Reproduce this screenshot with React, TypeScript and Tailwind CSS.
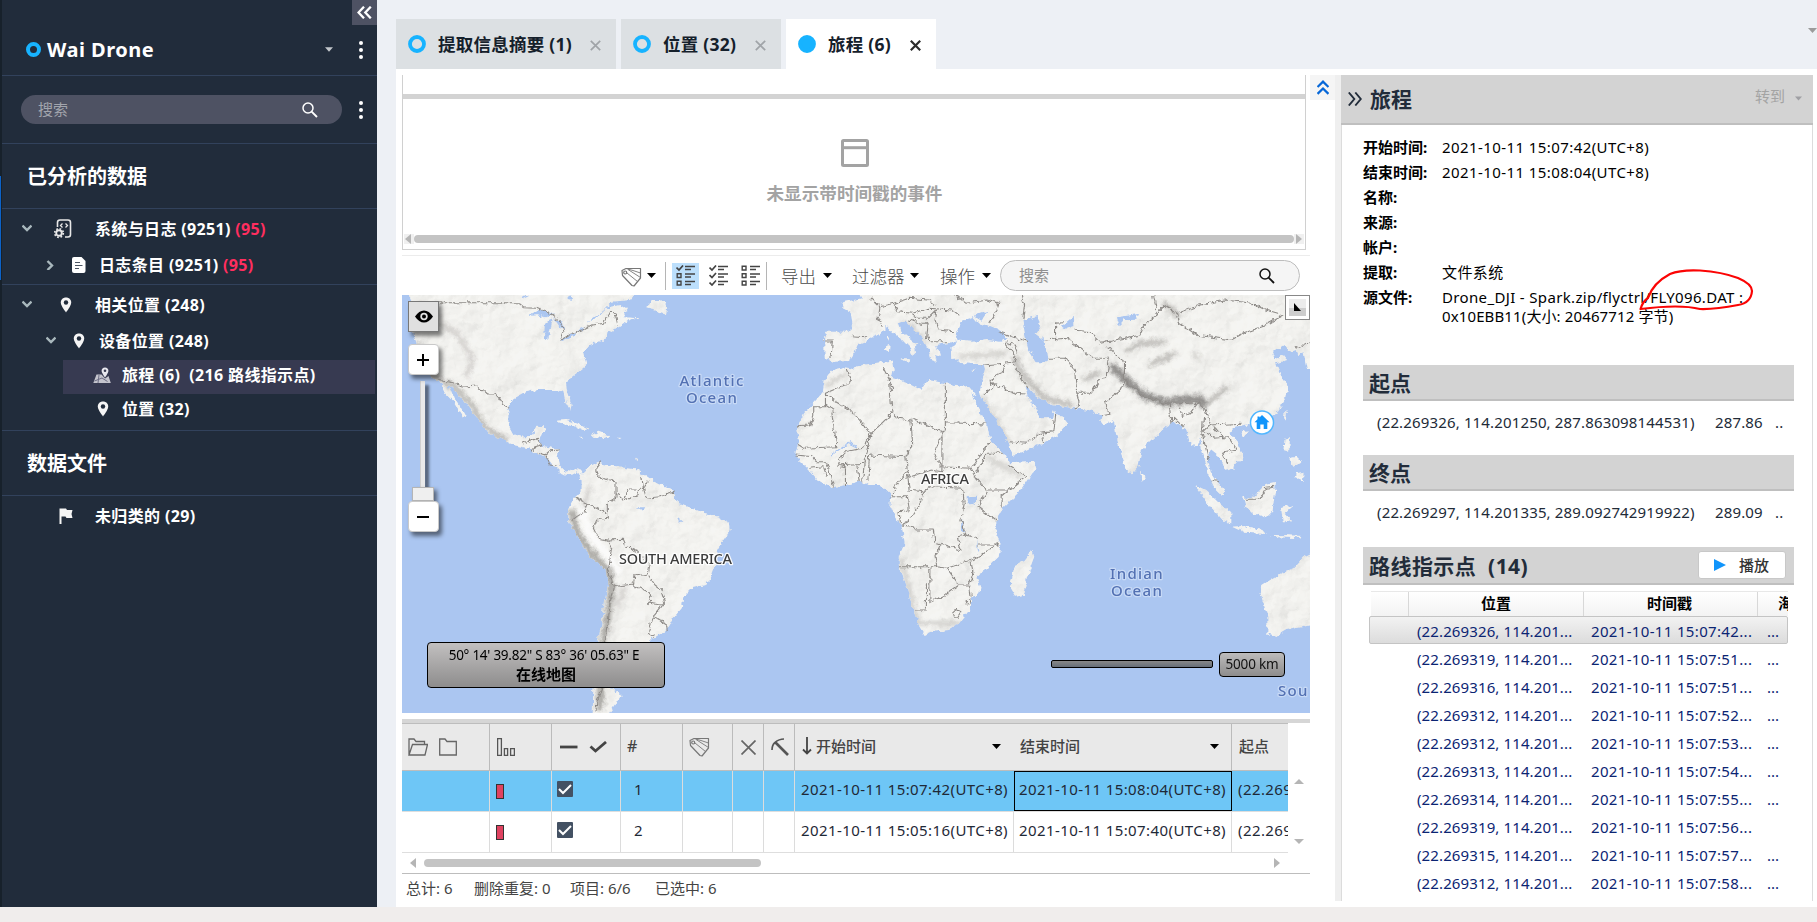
import React from "react";

const FONT = "font-['Noto_Sans','Noto_Sans_CJK_SC',sans-serif]";

/* ---------- small icons ---------- */

function Caret({ className = "" }: { className?: string }) {
  return (
    <svg className={className} width="9" height="5" viewBox="0 0 9 5">
      <path d="M0 0H9L4.5 5Z" fill="currentColor" />
    </svg>
  );
}

function Dots() {
  return (
    <svg width="4" height="18" viewBox="0 0 4 18" fill="#fff">
      <circle cx="2" cy="2" r="2" />
      <circle cx="2" cy="9" r="2" />
      <circle cx="2" cy="16" r="2" />
    </svg>
  );
}

function Magnifier({ color }: { color: string }) {
  return (
    <svg width="16" height="16" viewBox="0 0 16 16" fill="none" stroke={color} strokeWidth="1.5">
      <circle cx="6" cy="6" r="5" />
      <path d="M9.6 9.6L15 15" strokeWidth="1.9" />
    </svg>
  );
}

function Pin() {
  return (
    <svg width="12" height="16" viewBox="0 0 12 16">
      <path d="M6 0.5C2.8 0.5 0.8 2.8 0.8 5.6C0.8 9 6 15.5 6 15.5S11.2 9 11.2 5.6C11.2 2.8 9.2 0.5 6 0.5Z" fill="#f5f5f5" />
      <circle cx="6" cy="5.5" r="2.2" fill="#212c3b" />
    </svg>
  );
}

function Chevron({ open }: { open: boolean }) {
  return (
    <svg width="10" height="10" viewBox="0 0 10 10" fill="none" stroke="#a9b8bd" strokeWidth="2.4">
      <path d={open ? "M0.5 1.5L5 6L9.5 1.5" : "M2.500 1L7 5.5L2.500 10"} />
    </svg>
  );
}

function SystemLog() {
  return (
    <svg width="18" height="20" viewBox="0 0 18 20" fill="none" stroke="#e8e8e8" strokeWidth="1.6">
      <path d="M3.500 8V3.500Q3.500 1 6 1H14Q16.500 1 16.500 3.500V15.500Q16.500 18 14 18H11" />
      <path d="M8.500 4.500L6.500 6.500L8.500 8.500M11.500 4.500L13.500 6.500L11.500 8.500" strokeWidth="1.300" />
      <circle cx="5" cy="14" r="2.800" strokeWidth="1.900" />
      <circle cx="5" cy="14" r="4.300" strokeWidth="1.700" strokeDasharray="1.700 1.680" />
    </svg>
  );
}

function DocIcon() {
  return (
    <svg width="14" height="16" viewBox="0 0 14 16">
      <path d="M2 0H9.500L13.500 4V14Q13.500 16 11.500 16H2Q0 16 0 14V2Q0 0 2 0Z" fill="#fff" />
      <path d="M3 5.500H8M3 8.500H10.500M3 11.500H7" stroke="#4b5563" strokeWidth="1.200" />
    </svg>
  );
}

function JourneyIcon() {
  return (
    <svg width="18" height="17" viewBox="0 0 18 17">
      <path d="M3.500 7.500H8.500L12 11.500L15.500 9L17.800 16H0.300Z" fill="#c4c4cd" />
      <path d="M1.500 14L9 11L14.500 14.500M6 8L5 16" stroke="#6d6d84" fill="none" />
      <path d="M12 0.500C9.900 0.500 8.600 2 8.600 3.800C8.600 6 12 10.500 12 10.500S15.400 6 15.400 3.800C15.400 2 14.100 0.500 12 0.500Z" fill="#e8e8ee" />
      <circle cx="12" cy="3.800" r="1.300" fill="#373a51" />
    </svg>
  );
}

function FlagIcon() {
  return (
    <svg width="14" height="16" viewBox="0 0 14 16">
      <path d="M0.500 0.500H7L8 2H13.500L12.500 6L13.500 10H7.500L6.500 8.500H2.500V16H0.500Z" fill="#f5f5f5" />
    </svg>
  );
}

function TagsIcon() {
  return (
    <svg width="21" height="20" viewBox="0 0 21 20" fill="none" stroke="#777" strokeWidth="1.200" strokeLinejoin="round">
      <path d="M1 3.500L5 1.500H19.500V11L13 19L11 18.500L1.500 8.500Z" />
      <path d="M6 6L16.500 14.500M7 2.500L19.500 10.500M5 1.500L12 3.500L19.500 6" strokeWidth="0.900" />
      <circle cx="4.200" cy="5.500" r="1.500" />
    </svg>
  );
}

function ListIcon({ checks }: { checks: number }) {
  return (
    <svg width="20" height="21" viewBox="0 0 20 21" fill="none" stroke="#444" strokeWidth="1.400">
      {[0, 1, 2].map((i) => (
        <g key={i} transform={`translate(0 ${i * 7.5})`}>
          {i < checks ? <path d="M0.500 2.500L3 5L7 0.500" strokeWidth="1.700" /> : <path d="M1.200 1.200H5V5H1.200Z" />}
          <path d="M9 1.500H19M9 4.500H15" />
        </g>
      ))}
    </svg>
  );
}

function ScrollArrow({ dir }: { dir: "left" | "right" | "up" | "down" }) {
  const d = {
    left: "M7 0V10L1 5Z",
    right: "M2 0V10L8 5Z",
    up: "M0 7H10L5 2Z",
    down: "M0 2H10L5 7Z",
  }[dir];
  return (
    <svg width="10" height="10" viewBox="0 0 10 10">
      <path d={d} fill="#b5b5b5" />
    </svg>
  );
}

/* ---------- sidebar ---------- */

function TreeRow({
  h,
  pad,
  open,
  icon,
  iconW,
  text,
  extra,
}: {
  h: string;
  pad: string;
  open?: boolean;
  icon: React.ReactNode;
  iconW: string;
  text: string;
  extra?: string;
}) {
  return (
    <div className={`flex items-center ${h} ${pad}`}>
      <span className="w-[10px] shrink-0">{open === undefined ? null : <Chevron open={open} />}</span>
      <span className={`flex justify-center shrink-0 ${iconW}`}>{icon}</span>
      <span className="text-[16px] font-bold text-white tracking-[0.350px] whitespace-pre leading-6">
        {text}
        {extra && <span className="text-[#ff2e5f]"> {extra}</span>}
      </span>
    </div>
  );
}

function Sidebar() {
  return (
    <aside className="w-[377px] h-[907px] shrink-0 flex bg-[#212c3b]">
      <div className="w-[2px] flex flex-col bg-[#17212b]">
        <div className="h-[104px] w-px mt-[176px] bg-[#0c62c8]" />
      </div>
      <div className="flex-1 flex flex-col">
        <div className="relative h-[76px] border-b border-[#32425c] flex items-center pl-[24px] pr-[14px] pt-[24px]">
          <svg width="15" height="15" viewBox="0 0 15 15">
            <circle cx="7.500" cy="7.500" r="5.500" fill="none" stroke="#17b3ff" strokeWidth="4" />
          </svg>
          <span className="ml-[6px] text-[20px] font-bold text-white tracking-[0.500px] leading-6">Wai Drone</span>
          <Caret className="ml-auto mr-[26px] text-[#c3c7cc] w-[8px]" />
          <Dots />
          <div className="absolute right-0 top-0 w-[25px] h-[25px] bg-[#4e5263] flex items-center justify-center">
            <svg width="15" height="13" viewBox="0 0 15 13" fill="none" stroke="#fff" strokeWidth="2.300">
              <path d="M7 0.700L1.500 6.500L7 12.300M13.800 0.700L8.300 6.500L13.800 12.300" />
            </svg>
          </div>
        </div>
        <div className="h-[68px] border-b border-[#32425c] flex items-center pl-[19px] pr-[14px]">
          <div className="w-[321px] h-[29px] rounded-full bg-[#4e5263] flex items-center pl-[17px] pr-[24px]">
            <span className="text-[15px] text-[#a2a5ad]">搜索</span>
            <span className="ml-auto"><Magnifier color="#fff" /></span>
          </div>
          <span className="ml-auto"><Dots /></span>
        </div>
        <h2 className="h-[65px] border-b border-[#32425c] flex items-center pl-[25px] pt-[2px] text-[20px] font-bold text-white">已分析的数据</h2>
        <div className="h-[76px] border-b border-[#32425c] pt-[2px]">
          <TreeRow h="h-[36px]" pad="pl-[20px]" open iconW="w-[63px] pr-[1px]" icon={<SystemLog />} text="系统与日志 (9251)" extra="(95)" />
          <TreeRow h="h-[36px]" pad="pl-[43px]" open={false} iconW="w-[44px] pl-[3px]" icon={<DocIcon />} text="日志条目 (9251)" extra="(95)" />
        </div>
        <div className="h-[146px] border-b border-[#32425c] pt-[2px]">
          <TreeRow h="h-[36px]" pad="pl-[20px]" open iconW="w-[63px] pl-[5px]" icon={<Pin />} text="相关位置 (248)" />
          <TreeRow h="h-[37px]" pad="pl-[44px] pb-[2px]" open iconW="w-[43px] pl-[3px]" icon={<Pin />} text="设备位置 (248)" />
          <div className="ml-[61px] mr-[2px] h-[34px] bg-[#373a51] flex items-center pb-[4px]">
            <TreeRow h="h-[30px]" pad="pl-[18px]" iconW="w-[31px] pr-[9px]" icon={<JourneyIcon />} text="旅程 (6)  (216 路线指示点)" />
          </div>
          <TreeRow h="h-[31px]" pad="pl-[79px] pb-[2px]" iconW="w-[31px] pr-[8px]" icon={<Pin />} text="位置 (32)" />
        </div>
        <h2 className="h-[65px] border-b border-[#32425c] flex items-center pl-[25px] pt-[2px] text-[20px] font-bold text-white">数据文件</h2>
        <TreeRow h="h-[41px]" pad="pl-[20px] pb-[2px]" iconW="w-[63px] pl-[5px]" icon={<FlagIcon />} text="未归类的 (29)" />
      </div>
    </aside>
  );
}

/* ---------- tabs ---------- */

function Tab({ label, active, w }: { label: string; active?: boolean; w: string }) {
  return (
    <div className={`${w} h-[50px] flex items-center pl-[12px] pr-[15px] ${active ? "bg-white" : "bg-[#dce0e3]"}`}>
      <svg width="18" height="18" viewBox="0 0 18 18" className="-mt-[11px] translate-y-[5px]">
        <circle cx="9" cy="9" r="7" fill={active ? "#17b3ff" : "none"} stroke="#17b3ff" strokeWidth="3.800" />
      </svg>
      <span className="ml-[12px] text-[17.500px] font-bold text-[#15202b] whitespace-pre tracking-[0.250px]">{label}</span>
      <svg width="11" height="11" viewBox="0 0 11 11" className="ml-auto mt-[2px]" stroke={active ? "#2b2b2b" : "#a0a4a8"} strokeWidth={active ? 2.2 : 1.7}>
        <path d="M0.800 0.800L10.200 10.200M10.200 0.800L0.800 10.200" />
      </svg>
    </div>
  );
}

/* ---------- timeline ---------- */

function Timeline() {
  return (
    <div className="flex h-[180px]">
      <div className="w-[904px] h-[175px] border-x border-b border-[#d0d0d0] flex flex-col">
        <div className="h-[19px]" />
        <div className="h-[5px] bg-[#d3d3d3]" />
        <div className="flex-1 flex flex-col items-center pt-[40px] pl-px">
          <svg width="28" height="28" viewBox="0 0 28 28" fill="none" stroke="#a3a3a3" strokeWidth="3">
            <rect x="1.500" y="1.500" width="25" height="25" rx="1" />
            <path d="M1.500 8.700H26.500" />
          </svg>
          <div className="mt-[13px] text-[17.600px] leading-[26px] font-bold text-[#a3a3a3]">未显示带时间戳的事件</div>
        </div>
        <div className="h-[15px] flex items-start px-px">
          <span className="bg-[#f0f0f0]"><ScrollArrow dir="left" /></span>
          <div className="flex-1 h-[8px] mt-px rounded-full bg-[#c4c4c4]" />
          <span className="bg-[#f0f0f0]"><ScrollArrow dir="right" /></span>
        </div>
      </div>
      <div className="ml-[4px] w-[25px] h-[25px] bg-[#f5f5f5] flex items-center justify-center">
        <svg width="12" height="15" viewBox="0 0 12 15" fill="none" stroke="#0667d8" strokeWidth="2.300">
          <path d="M0.500 7L6 1.700L11.500 7M0.500 13.800L6 8.500L11.500 13.800" />
        </svg>
      </div>
    </div>
  );
}

function Toolbar() {
  const label = "text-[17.500px] text-[#4a4a4a] font-light leading-6";
  return (
    <div className="w-[908px] h-[40px] border-t border-[#ececec] flex items-center pl-[219px] pr-[10px]">
      <span className="mt-[2px]"><TagsIcon /></span>
      <Caret className="ml-[5px]" />
      <div className="ml-[9px] w-px h-[28px] bg-[#b5b5b5]" />
      <div className="ml-[6px] w-[27px] h-[26px] bg-[#bcdffc] flex items-center justify-center"><ListIcon checks={1} /></div>
      <span className="ml-[10px]"><ListIcon checks={3} /></span>
      <span className="ml-[12px]"><ListIcon checks={0} /></span>
      <div className="ml-[5px] w-px h-[28px] bg-[#b5b5b5]" />
      <span className={`ml-[14px] w-[42px] ${label}`}>导出</span>
      <Caret />
      <span className={`ml-[20px] w-[58px] ${label}`}>过滤器</span>
      <Caret />
      <span className={`ml-[21px] w-[42px] ${label}`}>操作</span>
      <Caret />
      <div className="ml-auto w-[300px] h-[31px] rounded-full border border-[#bdbdbd] bg-[#f5f5f5] flex items-center pl-[18px] pr-[24px]">
        <span className="text-[15px] text-[#8f8f8f]">搜索</span>
        <span className="ml-auto"><Magnifier color="#111" /></span>
      </div>
    </div>
  );
}

/* ---------- map ---------- */

const WEST = "translate(390 290) scale(0.33333)";
const EAST = "translate(780 290) scale(0.34447 0.33333)";

const LAND_WEST = [
  "M50 0L75 60L70 130L80 165L95 215L120 262L148 275L165 310L190 335L205 360L222 386L228 380L205 340L185 310L175 285L195 300L220 330L250 370L272 395L285 425L330 445L370 465L415 475L440 490L470 502L490 527L515 550L540 557L560 547L572 562L577 545L550 538L528 545L508 525L503 505L508 480L480 472L455 468L450 450L465 412L440 410L425 437L395 440L370 432L355 405L355 350L370 325L400 308L440 300L500 300L520 305L528 340L540 362L545 345L530 300L528 275L560 250L590 225L580 190L600 165L620 155L650 145L652 130L690 108L715 92L750 85L700 82L712 60L690 45L655 52L615 88L590 98L640 62L665 35L720 30L745 0Z",
  "M772 55L785 30L810 30L832 52L828 72L800 62Z",
  "M500 392L530 390L570 405L600 420L580 422L545 405L510 398Z",
  "M605 435L625 425L660 437L640 445L610 440Z",
  "M565 440L580 441L578 446ZM680 440L700 441L690 446ZM735 500L742 505L738 512Z",
  "M572 560L590 535L625 515L640 522L665 528L700 530L735 535L765 555L800 580L845 600L862 640L895 652L930 665L985 680L1020 700L1022 720L1000 750L980 785L975 830L960 870L945 885L905 895L880 920L875 955L850 985L825 1025L795 1045L780 1040L785 1080L740 1110L700 1130L690 1170L660 1195L695 1215L680 1240L655 1275H608L610 1200L620 1150L622 1060L635 1000L645 930L655 880L650 840L600 800L565 745L535 695L535 660L550 630L575 605L575 575Z",
];

const LAND_EAST = [
  "M225 0L238 25L178 38L185 55L205 65L212 110L205 125L135 125L128 140L130 205L155 215L200 213L215 190L225 165L250 155L265 140L290 130L310 108L325 125L355 150L378 175L385 198L392 190L388 165L410 168L385 152L355 125L345 100L365 92L390 120L415 145L430 175L440 210L455 215L450 195L465 200L460 180L450 165L495 158L515 150L510 165L498 172L500 200L520 218L560 222L590 222L595 240L588 270L580 300L585 320L610 360L640 410L665 460L672 495L700 490L760 460L800 440L835 400L820 380L800 375L795 360L790 385L755 385L740 355L720 320L710 290L722 292L745 320L790 345L855 355L900 360L935 375L930 395L945 405L970 390L975 430L990 490L1010 545L1025 550L1040 530L1050 480L1090 440L1120 410L1145 395L1165 410L1180 420L1190 460L1210 465L1220 440L1225 480L1240 530L1245 560L1265 600L1285 620L1290 600L1270 575L1250 545L1240 500L1250 480L1280 505L1290 530L1305 542L1320 530L1345 500L1330 460L1305 430L1320 410L1350 405L1400 395L1440 370L1470 320L1475 290L1455 260L1440 220L1472 210L1460 195L1435 205L1428 185L1460 165L1475 185L1500 180L1505 195L1520 190L1530 240L1560 240V0Z",
  "M205 235L240 225L325 212L330 240L325 265L370 280L410 300L430 270L480 280L550 292L572 320L555 310L570 345L600 400L610 450L650 490L665 520L745 515L740 540L700 600L650 650L625 690L625 730L640 760L635 800L600 835L570 860L582 890L575 910L555 925L550 960L520 1000L490 1020L440 1025L420 1035L405 1010L390 970L375 920L365 880L345 830L345 800L362 760L355 720L345 695L318 650L320 610L290 585L255 585L235 572L180 588L145 592L110 570L80 535L55 510L45 490L55 455L50 410L70 370L105 330L125 305L130 270L155 240L185 232Z",
  "M732 780L738 800L720 850L705 915L685 920L668 890L682 825L710 810Z",
  "M1045 545L1062 565L1050 575Z",
  "M1205 585L1235 600L1275 640L1310 670L1310 700L1285 690L1250 650Z",
  "M1312 710L1350 708L1400 720L1410 732L1350 728Z",
  "M1425 735L1470 736L1520 738L1505 745L1450 742Z",
  "M1345 625L1375 620L1410 582L1440 575L1435 620L1430 660L1410 682L1375 670L1352 650Z",
  "M1455 655L1490 645L1465 668L1488 695L1470 688L1460 698Z",
  "M1465 445L1480 445L1478 485L1462 480ZM1500 550L1520 545L1518 572L1490 560ZM1478 505L1500 500L1515 515L1490 530Z",
  "M1463 378L1472 362L1468 395ZM1340 425L1358 425L1350 440Z",
  "M350 205L378 205L372 218ZM308 165L318 162L316 186L308 182ZM311 142L318 140L316 155ZM553 240L568 238L560 246Z",
  "M1560 780L1520 800L1490 835L1455 850L1400 885L1395 910L1415 980L1415 1030L1440 1038L1470 1020L1560 1003Z",
];

const WATER_WEST =
  "M412 78L450 58L490 72L465 82L440 76ZM465 98L488 88L474 152L462 145ZM490 85L518 95L522 115L508 112ZM508 150L552 130L550 138L520 153ZM550 125L582 112L578 120ZM400 25L420 15H410L395 25ZM740 652L765 652L755 660ZM862 680L880 695L870 697ZM540 15L552 30L535 28Z";
const WATER_EAST =
  "M510 135L530 92L560 82L575 100L600 105L640 122L658 145L640 155L600 150L560 155L520 152ZM562 78L605 62L585 92ZM704 90L745 78L758 105L742 130L768 150L778 217L745 217L722 180L712 140ZM818 108L850 80L852 108L830 116ZM978 82L1040 72L1035 86L1000 88L985 105ZM545 622L570 620L568 640L545 640ZM528 690L535 725L525 715ZM572 750L580 790L574 780Z";

const BORDERS_WEST =
  "M147 38H385L400 50L440 52L470 65L500 85L515 100L522 125L512 150L550 128L575 120L605 105L640 100L658 67L675 68L683 103M148 272L175 275L220 288L258 285L290 312L318 312L345 352L358 354M400 462L425 450L445 445L455 465L435 470L425 485M440 487L465 495L480 482L508 480M468 498L480 525L500 528M560 625L590 640L600 645L650 670M635 515L620 535L625 560L655 572L678 575L678 625L655 635L655 685L620 690L610 715L625 745L650 750L700 748L710 770L745 785L780 825L775 852L735 858L730 885L770 905L785 915L775 940L815 945L825 930L815 900L795 885L775 855M590 642L585 665L560 680L545 692M678 610L700 630L740 615L760 590L755 560M775 575L760 595L770 625L810 620L855 605M650 750L665 775L655 840L670 890L730 882M670 890L660 940L650 1040L635 1070M790 980L775 1030L790 1040M790 980L830 1005L832 1025M822 940L790 980M635 1195L620 1240L618 1265M740 600L712 600L705 625";
const BORDERS_EAST =
  "M208 137L250 140M128 150L152 150L148 207M265 25L290 50L285 85L297 110M290 50L330 40L340 65L385 70L430 55L500 60L525 80M330 40L375 25L430 30L450 45M385 75L400 85L430 85L455 60M375 90L410 100L430 100L425 150M455 65L450 90L460 120L505 125M430 140L435 155L490 155M510 15L540 40L600 30L635 40L625 70L605 100M635 125L690 145L720 155M655 155L680 165L690 190M590 225L650 220L685 215L670 180L650 155M610 270L625 285L685 310L710 312M625 285L590 315M650 220L645 250L610 270L612 285M680 225L700 260L720 295M770 150L830 145L860 165L910 205L955 205M800 155V100L820 98M855 120L900 125L930 160L1045 135L1060 100L1095 75L1085 15M778 205L830 205L855 240L862 310L900 310L925 275L950 260L955 210M862 310L870 345L858 355M1000 270L985 305L945 335L955 370L930 375M950 165L975 195L1000 215L1000 270L1055 320L1130 340L1215 335L1235 360L1250 405L1340 400M1130 340L1135 400L1145 385L1170 410M1160 350L1165 380L1190 370L1215 335M1095 75L1115 45L1155 75L1160 100L1210 135L1310 150L1345 130L1400 110L1460 75L1410 60L1370 40L1290 30L1220 45L1155 70M1230 380L1225 430L1245 510M1250 405L1230 425L1260 445L1300 440L1325 480L1285 490L1300 520M1260 410L1290 445M1250 570L1275 575M1350 628L1390 628L1410 595L1435 592M665 455L715 460L755 430L795 425L800 375M760 430L767 462M1500 175L1545 150M700 15L710 45L705 85M50 410L85 408L95 380L95 350L132 350V310L200 280L210 275L195 240M132 315L205 360L265 430L240 475L190 485L165 525M150 365L165 470L70 475L50 462M132 350V345M300 235L318 270L325 370L265 430M380 385L470 425V545L440 540L365 565M480 280V420L470 425M480 398L602 402M325 370L345 385L380 390L385 460L365 500L260 495L255 570M265 430L245 510L240 575M132 345L160 365M165 525L250 520M45 495L95 500L105 515L135 515L145 550L155 590M165 525L190 530L190 585M85 535L125 530L135 560M223 525L230 575M470 425L450 490L465 530L555 535L570 510L610 455M555 535L570 565L600 600L665 600L715 560L660 525M650 490L600 490L570 550M665 600L645 615V655M600 600L575 650L625 690M365 500L370 545L340 580L325 615M370 550L375 600L415 605L440 590L530 595L535 640L525 690L540 735L575 745M318 620H370L375 660L345 665L350 700M415 605L405 645L375 690L350 705L390 710L395 720L445 720L450 760L465 765L450 800L455 830H345M540 735L515 740L525 780L465 760M455 830L485 835L555 810L585 795L635 760M485 835L520 885L480 915L435 935V835M520 885L550 885L555 920M555 815L560 850L550 885M425 880V960L390 960M500 970L512 958L525 965L515 982L503 982ZM540 932L550 930L552 940L542 942ZM575 765L635 765M320 280L330 290L318 310";

function WorldMap() {
  const halo = { paintOrder: "stroke" as const, stroke: "#ffffff", strokeWidth: 2.5, strokeLinejoin: "round" as const };
  return (
    <svg width="908" height="418" viewBox="402 295 908 418" className="block">
      <defs>
        <filter id="rough" x="392" y="285" width="928" height="438" filterUnits="userSpaceOnUse">
          <feTurbulence type="fractalNoise" baseFrequency="0.18" numOctaves="3" seed="4" />
          <feDisplacementMap in="SourceGraphic" scale="6" xChannelSelector="R" yChannelSelector="G" />
        </filter>
        <filter id="relief" x="392" y="285" width="928" height="438" filterUnits="userSpaceOnUse">
          <feTurbulence type="fractalNoise" baseFrequency="0.028" numOctaves="4" seed="11" />
          <feDiffuseLighting surfaceScale="5" diffuseConstant="1.150" lightingColor="#f6f5f2">
            <feDistantLight azimuth="225" elevation="60" />
          </feDiffuseLighting>
        </filter>
        <filter id="soft" x="392" y="285" width="928" height="438" filterUnits="userSpaceOnUse">
          <feGaussianBlur stdDeviation="2.200" />
        </filter>
        <clipPath id="land">
          {LAND_WEST.map((d) => (
            <path key={d} transform={WEST} d={d} />
          ))}
          {LAND_EAST.map((d) => (
            <path key={d} transform={EAST} d={d} />
          ))}
        </clipPath>
      </defs>
      <rect x="402" y="295" width="908" height="418" fill="#abc6f1" />
      <g filter="url(#rough)">
        <g fill="#f1f0ed">
          <path transform={WEST} d={LAND_WEST.join("")} />
          <path transform={EAST} d={LAND_EAST.join("")} />
        </g>
        <g clipPath="url(#land)">
          <rect x="392" y="285" width="928" height="438" filter="url(#relief)" opacity="0.330" />
          <g filter="url(#soft)" fill="none" strokeLinejoin="round">
            <g transform={WEST}>
              <path d="M545 660L560 730L610 795L655 840L665 900L650 1000L635 1080L630 1260" stroke="#a9a7a3" strokeWidth="20" />
              <path d="M575 650L595 725L640 780L690 850" stroke="#fbfbfa" strokeWidth="24" />
              <path d="M85 160L120 255L190 290L250 350L280 410L350 450" stroke="#bab8b4" strokeWidth="16" />
              <path d="M150 100L200 130L250 210L230 260M90 40L150 80M600 590L580 650M705 890L680 950" stroke="#d0cecb" strokeWidth="14" />
            </g>
            <g transform={EAST}>
              <path d="M960 225L1010 275L1055 315L1120 338L1215 325L1235 350" stroke="#8b8987" strokeWidth="22" />
              <path d="M680 200L705 255L770 325L850 345M1000 185L1050 160L1120 155M1070 225L1150 190M1110 35L1160 80M880 270L930 245M1240 340L1300 290" stroke="#b3b1ad" strokeWidth="13" />
              <path d="M520 200L660 190M355 95L380 110L420 160M1200 190L1220 210M585 320L665 460M350 800L400 1000L520 1000M600 500L700 560M130 290L190 250" stroke="#c8c6c2" strokeWidth="10" />
            </g>
          </g>
        </g>
        <g fill="#abc6f1">
          <path transform={WEST} d={WATER_WEST} />
          <path transform={EAST} d={WATER_EAST} />
        </g>
        <g fill="none" stroke="#8d8a87" strokeWidth="3.200" strokeLinejoin="round">
          <path transform={WEST} d={BORDERS_WEST} />
          <path transform={EAST} d={BORDERS_EAST} />
          <path transform={EAST} d="M145 498L200 458L225 470" stroke="#a4c2f3" />
        </g>
      </g>
      <g className={FONT} textAnchor="middle" fontWeight="500">
        <g fill="#5371b3" fontSize="15" {...halo} strokeOpacity={0.35} letterSpacing="1.300">
          <text x="712" y="386">Atlantic</text>
          <text x="712" y="402.500">Ocean</text>
          <text x="1137" y="579">Indian</text>
          <text x="1137" y="595.500">Ocean</text>
          <text x="1278" y="696" textAnchor="start">Sou</text>
        </g>
        <g fill="#3c3c3c" fontSize="14.500" {...halo} strokeOpacity={0.9}>
          <text x="675.500" y="564" textLength="113">SOUTH AMERICA</text>
          <text x="945" y="484" textLength="48">AFRICA</text>
        </g>
      </g>
      <g>
        <circle cx="1262" cy="422.500" r="11.500" fill="#fff" stroke="#52b7ff" strokeWidth="1.500" />
        <path d="M1262 415L1269.500 422.200H1267.300V429H1263.700V424.500H1260.300V429H1256.700V422.200H1254.500L1257.500 419.300V416.500H1259.500V417.400Z" fill="#1195fb" />
      </g>
    </svg>
  );
}

function MapView() {
  const key = "absolute left-[6px] w-[31px] h-[31px] rounded-[4px] bg-white border border-[#c9c9c9] shadow-[3px_4px_4px_rgba(0,0,0,0.5)] flex items-center justify-center pr-px";
  return (
    <div className="relative w-[908px] h-[418px] overflow-hidden">
      <WorldMap />
      <div className="absolute left-[6px] top-[6px] w-[31px] h-[31px] bg-[#e0e0e0] border border-[#777] shadow-[3px_4px_4px_rgba(0,0,0,0.5)] flex items-center justify-center">
        <svg width="18" height="13" viewBox="0 0 18 13">
          <path d="M0 6.500Q4 0.500 9 0.500T18 6.500Q14 12.500 9 12.500T0 6.500Z" fill="#000" />
          <circle cx="9" cy="6.500" r="3.700" fill="#e0e0e0" />
          <circle cx="9" cy="6.500" r="2" fill="#000" />
        </svg>
      </div>
      <div className="absolute left-[18px] top-[86px] w-[5px] h-[108px] bg-[#e9e9e9] border-l border-[#cfcfcf] shadow-[4px_4px_3px_rgba(0,0,0,0.5)]" />
      <div className={`${key} top-[49px]`}>
        <svg width="12" height="12" stroke="#000" strokeWidth="2"><path d="M0 6H12M6 0V12" /></svg>
      </div>
      <div className="absolute left-[10px] top-[192px] w-[22px] h-[14px] bg-[#efefef] border border-[#b5b5b5] shadow-[3px_3px_4px_rgba(0,0,0,0.5)]" />
      <div className={`${key} top-[206px]`}>
        <svg width="12" height="12" stroke="#000" strokeWidth="2"><path d="M0 6H12" /></svg>
      </div>
      <div className="absolute left-[25px] top-[347px] w-[238px] h-[46px] rounded-[4px] border border-black bg-linear-to-b from-[#c2c0c0] to-[#8e8d8d] flex flex-col items-center justify-center text-[13.500px] leading-[19px] text-black">
        <span className="tracking-[-0.250px] pr-[4px]">50° 14' 39.82" S 83° 36' 05.63" E</span>
        <span className="text-[15px] font-bold">在线地图</span>
      </div>
      <div className="absolute left-[649px] top-[365px] w-[162px] h-[8px] rounded-[2px] border border-black bg-linear-to-b from-[#888] to-[#666e78]" />
      <div className="absolute left-[817px] top-[357px] w-[66px] h-[25px] rounded-[4px] border border-black bg-linear-to-b from-[#bdbcbc] to-[#8e8d8d] flex items-center justify-center text-[13.500px] tracking-[-0.200px] text-[#111]">5000 km</div>
      <div className="absolute right-0 top-0 w-[25px] h-[25px] bg-white border border-[#888] flex items-center justify-center">
        <svg width="17" height="17" viewBox="0 0 17 17">
          <rect width="17" height="9" fill="#ececec" />
          <rect y="9" width="17" height="8" fill="#cdcdcd" />
          <path d="M5 4V12H12Z" fill="#000" />
        </svg>
      </div>
    </div>
  );
}

/* ---------- results table ---------- */

const COLS = "grid grid-cols-[88px_62px_69px_62px_50px_31px_31px_219px_218px_56px] w-[886px] overflow-hidden";

function Checkbox() {
  return (
    <svg width="16" height="16" viewBox="0 0 16 16">
      <rect width="16" height="16" rx="1" fill="#435163" />
      <path d="M2 8L6 12L14 4" fill="none" stroke="#fff" strokeWidth="2" />
    </svg>
  );
}

function ResultRow({ n, start, end, selected }: { n: string; start: string; end: string; selected?: boolean }) {
  const c = "border-r border-[#dcdcdc] flex items-center whitespace-nowrap";
  return (
    <div className={`${COLS} h-[41px] border-b border-[#dedede] text-[15px] tracking-[0.410px] text-[#1f2937] ${selected ? "bg-[#6ec6f6]" : "bg-white"}`}>
      <div className={c} />
      <div className={`${c} pl-[6px] pt-px`}><span className="w-[8px] h-[15px] border border-[#333] bg-[#df4260]" /></div>
      <div className={`${c} pl-[5px] pb-[4px]`}><Checkbox /></div>
      <div className={`${c} pl-[13px] pb-[3px]`}>{n}</div>
      <div className={c} />
      <div className={c} />
      <div className={c} />
      <div className={`${selected ? "" : "border-r border-[#dcdcdc]"} flex items-center whitespace-nowrap pl-[6px] pb-[3px]`}>{start}</div>
      <div className={`flex items-center whitespace-nowrap pb-[3px] ${selected ? "border border-black pl-[4px]" : "border-r border-[#dcdcdc] pl-[5px]"}`}>{end}</div>
      <div className="flex items-center whitespace-nowrap pl-[6px] pb-[3px] overflow-hidden">(22.269</div>
    </div>
  );
}

function Results() {
  const h = "border-r border-[#bbb] flex items-center";
  return (
    <div className="w-[908px] mt-[6px]">
      <div className="h-[4px] bg-[#d6d6d6]" />
      <div className="flex">
        <div className="w-[886px]">
          <div className={`${COLS} h-[48px] border-y border-[#bdbdbd] bg-[#e9e9e9] text-[15px] font-medium text-[#444]`}>
            <div className={`${h} pl-[6px] gap-[11px]`}>
              <svg width="20" height="18" viewBox="0 0 20 18" fill="none" stroke="#666" strokeWidth="1.300">
                <path d="M1 17V1H6L8 3.500H16.500V6.500M1 17L4.500 6.500H19.500L17 17Z" />
              </svg>
              <svg width="18" height="18" viewBox="0 0 18 18" fill="none" stroke="#666" strokeWidth="1.300">
                <path d="M0.700 17V1H6L8 3.500H17.300V17Z" />
              </svg>
            </div>
            <div className={`${h} pl-[7px]`}>
              <svg width="18" height="18" viewBox="0 0 18 18" fill="none" stroke="#555" strokeWidth="1.300">
                <path d="M0.600 0.600H4.400V17.400H0.600ZM7.400 10.600H10.600V17.400H7.400ZM13.600 10.600H17.400V17.400H13.600Z" />
              </svg>
            </div>
            <div className={`${h} pl-[8px]`}>
              <svg width="48" height="12" viewBox="0 0 48 12" fill="none" stroke="#444" strokeWidth="2.800">
                <path d="M0 6H17.500" />
                <path d="M30.500 5.500L35.500 10L46 1" />
              </svg>
            </div>
            <div className={`${h} pl-[6px] pb-[3px] text-[16px]`}>#</div>
            <div className={`${h} pl-[6px]`}><TagsIcon /></div>
            <div className={`${h} pl-[8px]`}>
              <svg width="15" height="15" stroke="#666" strokeWidth="1.700"><path d="M0.500 0.500L14.500 14.500M14.500 0.500L0.500 14.500" /></svg>
            </div>
            <div className={`${h} pl-[7px]`}>
              <svg width="18" height="18" viewBox="0 0 18 18" fill="none" stroke="#555">
                <path d="M4.500 4.500L17 17" strokeWidth="2.600" />
                <path d="M1 12Q1 7 4 4.500Q8 1 13 1" strokeWidth="1.700" />
              </svg>
            </div>
            <div className="flex items-center pl-[7px] pr-[13px] pb-[2px]">
              <svg width="10" height="18" viewBox="0 0 10 18" fill="none" stroke="#444" strokeWidth="1.800"><path d="M5 0V16.500M1 12.500L5 16.500L9 12.500" /></svg>
              <span className="ml-[4px]">开始时间</span>
              <Caret className="ml-auto text-black" />
            </div>
            <div className={`${h} pl-[6px] pr-[12px] pb-[2px]`}>
              <span>结束时间</span>
              <Caret className="ml-auto text-black" />
            </div>
            <div className="flex items-center pl-[7px] pb-[2px]">起点</div>
          </div>
          <ResultRow n="1" start="2021-10-11 15:07:42(UTC+8)" end="2021-10-11 15:08:04(UTC+8)" selected />
          <ResultRow n="2" start="2021-10-11 15:05:16(UTC+8)" end="2021-10-11 15:07:40(UTC+8)" />
        </div>
        <div className="w-[22px] flex flex-col justify-between items-center pt-[54px] pb-[6px]">
          <ScrollArrow dir="up" />
          <ScrollArrow dir="down" />
        </div>
      </div>
      <div className="h-[21px] flex items-center pl-[7px] pr-[28px] border-b border-[#bdbdbd]">
        <ScrollArrow dir="left" />
        <div className="ml-[5px] w-[337px] h-[8px] rounded-full bg-[#c4c4c4]" />
        <span className="ml-auto"><ScrollArrow dir="right" /></span>
      </div>
      <div className="h-[29px] flex items-center pl-[4px] text-[15px] text-[#444]">
        <span className="w-[68px]">总计: 6</span>
        <span className="w-[96px]">删除重复: 0</span>
        <span className="w-[85px]">项目: 6/6</span>
        <span>已选中: 6</span>
      </div>
    </div>
  );
}

/* ---------- detail panel ---------- */

const DETAILS: [string, string][] = [
  ["开始时间:", "2021-10-11 15:07:42(UTC+8)"],
  ["结束时间:", "2021-10-11 15:08:04(UTC+8)"],
  ["名称:", ""],
  ["来源:", ""],
  ["帐户:", ""],
  ["提取:", "文件系统"],
];

const WAYPOINTS: [string, string, string][] = [
  ["(22.269326, 114.201...", "2021-10-11 15:07:42...", "..."],
  ["(22.269319, 114.201...", "2021-10-11 15:07:51...", "..."],
  ["(22.269316, 114.201...", "2021-10-11 15:07:51...", "..."],
  ["(22.269312, 114.201...", "2021-10-11 15:07:52...", "..."],
  ["(22.269312, 114.201...", "2021-10-11 15:07:53...", "..."],
  ["(22.269313, 114.201...", "2021-10-11 15:07:54...", "..."],
  ["(22.269314, 114.201...", "2021-10-11 15:07:55...", "..."],
  ["(22.269319, 114.201...", "2021-10-11 15:07:56...", ""],
  ["(22.269315, 114.201...", "2021-10-11 15:07:57...", "..."],
  ["(22.269312, 114.201...", "2021-10-11 15:07:58...", "..."],
];

function PointSection({ title, coords, alt }: { title: string; coords: string; alt: string }) {
  return (
    <section>
      <h3 className="h-[36px] bg-[#d3d3d3] border-b-2 border-[#bfbfbf] pl-[6px] pt-[3px] flex items-center text-[21px] font-bold text-[#222c3a]">{title}</h3>
      <div className="h-[54px] flex items-center pl-[14px] pb-[11px] text-[15px] tracking-[0.150px] text-[#222b38] whitespace-nowrap">
        <span className="w-[338px]">{coords}</span>
        <span className="w-[60px]">{alt}</span>
        <span>..</span>
      </div>
    </section>
  );
}

function DetailPanel() {
  return (
    <div className="w-[472px] h-[826px] flex flex-col">
      <div className="h-[50px] bg-[#d3d3d3] border-b-2 border-[#bfbfbf] flex items-center pl-[7px] pr-[11px]">
        <svg width="14" height="14" viewBox="0 0 14 14" fill="none" stroke="#222c3a" strokeWidth="1.900">
          <path d="M0.800 0.500L6.300 7L0.800 13.500M7.300 0.500L12.800 7L7.300 13.500" />
        </svg>
        <span className="ml-[8px] mt-[2px] text-[21px] font-bold text-[#222c3a]">旅程</span>
        <span className="ml-auto mb-[6px] text-[15px] text-[#a3a3a3]">转到</span>
        <Caret className="ml-[10px] mb-[2px] text-[#9f9fa3] w-[7px]" />
      </div>
      <div className="flex-1 border-x border-[#dcdcdc] pl-[21px] pr-[18px]">
        <dl className="relative pt-[10px] h-[240px] text-[15px] text-black">
          {DETAILS.map(([k, v]) => (
            <div key={k} className="flex h-[25px] items-center">
              <dt className="w-[79px] font-bold text-[15px]">{k}</dt>
              <dd className="tracking-[0.420px]">{v}</dd>
            </div>
          ))}
          <div className="flex pt-[3px] leading-[19px]">
            <dt className="w-[79px] font-bold text-[15px]">源文件:</dt>
            <dd className="whitespace-nowrap">
              <span className="tracking-[0.350px]">Drone_DJI - Spark.zip/flyctrl/FLY096.DAT :</span><br />
              <span className="tracking-[0.120px]">0x10EBB11(大小: 20467712 字节)</span>
            </dd>
          </div>
          <svg className="absolute left-[273px] top-[140px]" width="122" height="50" viewBox="1636 265 122 50" fill="none" stroke="#fb0404" strokeWidth="2.200" strokeLinecap="round">
            <path d="M1640.500 309Q1643 301 1648 298Q1653 283 1670 274Q1681 269.500 1700 270.500Q1722 272 1738 278Q1752 284 1752 291Q1751 303 1738 305Q1715 309.500 1700 309Q1680 304 1640.500 309" />
          </svg>
        </dl>
        <PointSection title="起点" coords="(22.269326, 114.201250, 287.863098144531)" alt="287.86" />
        <PointSection title="终点" coords="(22.269297, 114.201335, 289.092742919922)" alt="289.09" />
        <div className="mt-[2px] h-[38px] bg-[#d3d3d3] border-b-2 border-[#bfbfbf] flex items-center pl-[6px] pr-[8px]">
          <h3 className="pt-[3px] text-[21px] font-bold text-[#222c3a] whitespace-pre tracking-[0.450px]">路线指示点  (14)</h3>
          <button className="ml-auto w-[88px] h-[28px] rounded-[3px] bg-white border border-[#c8c8c8] flex items-center pl-[15px] text-[15px] font-medium text-[#333]">
            <svg width="12" height="12" viewBox="0 0 12 12"><path d="M0 0L12 6L0 12Z" fill="#1195fb" /></svg>
            <span className="ml-[13px]">播放</span>
          </button>
        </div>
        <div className="mt-[6px] ml-[6px] w-[419px]">
          <div className="ml-[2px] h-[25px] border-t border-[#e8e8e8] bg-linear-to-b from-white to-[#f3f3f3] flex text-[15px] font-bold text-black overflow-hidden leading-[23px]">
            <div className="w-[38px] shrink-0 border-r border-[#d8d8d8]" />
            <div className="w-[175px] shrink-0 border-r border-[#d8d8d8] text-center">位置</div>
            <div className="w-[174px] shrink-0 border-r border-[#d8d8d8] text-center pr-[2px]">时间戳</div>
            <div className="pl-[20px] whitespace-nowrap">海</div>
          </div>
          {WAYPOINTS.map(([p, t, m], i) => (
            <div
              key={i}
              className={`h-[28px] flex items-center pl-[47px] pt-[2px] text-[15px] text-[#0c2573] whitespace-nowrap border rounded-[2px] ${
                i === 0 ? "border-[#c4c4c4] bg-linear-to-b from-[#f2f2f2] to-[#dcdcdc]" : "border-transparent"
              }`}
            >
              <span className="w-[174px] tracking-[0.120px]">{p}</span>
              <span className="w-[176px] tracking-[0.340px]">{t}</span>
              <span>{m}</span>
            </div>
          ))}
        </div>
      </div>
    </div>
  );
}

export default function App() {
  return (
    <div className={`w-[1817px] h-[922px] overflow-hidden bg-[#f0edec] ${FONT}`}>
      <div className="flex h-[907px]">
        <Sidebar />
        <div className="flex-1 bg-[#edf0f5] pl-[19px] flex flex-col">
          <div className="h-[69px] flex items-end gap-[5px]">
            <Tab w="w-[220px]" label="提取信息摘要 (1)" />
            <Tab w="w-[160px]" label="位置 (32)" />
            <Tab w="w-[150px]" label="旅程 (6)" active />
            <Caret className="ml-auto mb-[36px] text-[#9b9b9b]" />
          </div>
          <div className="flex-1 bg-white pl-[6px] pt-[6px] flex">
            <div className="w-[933px] flex flex-col">
              <Timeline />
              <Toolbar />
              <MapView />
              <Results />
            </div>
            <div className="w-[6px] h-[826px] bg-[#efefef]" />
            <DetailPanel />
          </div>
        </div>
      </div>
    </div>
  );
}
